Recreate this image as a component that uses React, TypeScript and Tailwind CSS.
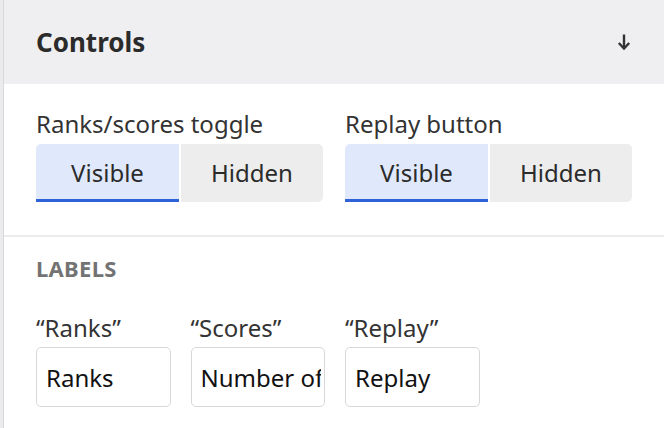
import React from "react";

function Segmented({ label }: { label: string }) {
  return (
    <div className="flex flex-col w-[287px]">
      <div className="text-[24px] leading-[28px] text-[#333333] mb-[6px] whitespace-nowrap">{label}</div>
      <div className="flex gap-[2px] h-[58px]">
        <div className="w-[143px] flex items-center justify-center bg-[#e0e9fb] rounded-tl-[5px] border-b-[3px] border-[#2f62d8] text-[24px] text-[#2b2b2b] pt-[3px]">
          Visible
        </div>
        <div className="flex-1 flex items-center justify-center bg-[#ededed] rounded-r-[5px] text-[24px] text-[#2b2b2b]">
          Hidden
        </div>
      </div>
    </div>
  );
}

function Field({ label, value }: { label: string; value: string }) {
  return (
    <div className="flex flex-col w-[134.5px]">
      <div className="text-[24px] leading-[28px] text-[#333333] mb-[5px] whitespace-nowrap">{label}</div>
      <input
        readOnly
        value={value}
        className="h-[60px] w-full border-[1.5px] border-[#d8d8d8] rounded-[5px] pl-[9px] pr-[3px] text-[24px] text-[#111111] bg-white outline-none"
        style={{ fontFamily: '"Noto Sans", "Open Sans", sans-serif' }}
      />
    </div>
  );
}

export default function App() {
  return (
    <div
      className="flex w-[664px] h-[428px] overflow-hidden bg-white"
      style={{ fontFamily: '"Noto Sans", "Open Sans", sans-serif' }}
    >
      <div className="w-[4px] shrink-0 bg-[#ebebed] border-r border-[#d9d9d9]"></div>
      <div className="flex-1 flex flex-col">
        <div className="h-[84px] bg-[#efeff1] flex items-center justify-between pl-[32px] pr-[33px] shrink-0">
          <div className="text-[26px] font-bold text-[#2b2b2b] leading-[30px]">Controls</div>
          <svg width="14" height="18" viewBox="0 0 14 18" fill="none">
            <path d="M7 1.5 V15" stroke="#333" strokeWidth="2.4" />
            <path d="M1.8 10 L7 15.5 L12.2 10" stroke="#333" strokeWidth="2.4" fill="none" />
          </svg>
        </div>
        <div className="flex gap-[22px] pl-[32px] pt-[26px] pb-[33px] border-b-2 border-[#ececec] shrink-0">
          <Segmented label="Ranks/scores toggle" />
          <Segmented label="Replay button" />
        </div>
        <div className="flex flex-col pl-[32px] pt-[17px]">
          <div className="text-[22px] font-bold text-[#737373] tracking-[0.3px] leading-[28px]">LABELS</div>
          <div className="flex gap-[20px] mt-[32px]">
            <Field label="“Ranks”" value="Ranks" />
            <Field label="“Scores”" value="Number of players" />
            <Field label="“Replay”" value="Replay" />
          </div>
        </div>
      </div>
    </div>
  );
}
